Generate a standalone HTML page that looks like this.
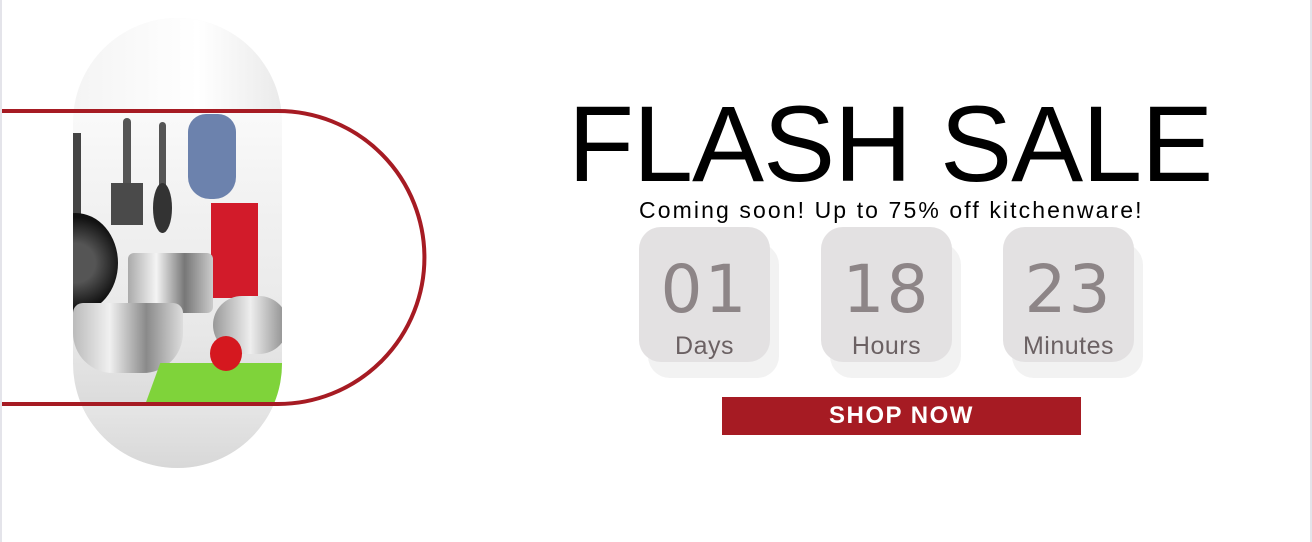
<!DOCTYPE html>
<html><head><meta charset="utf-8"><style>
*{margin:0;padding:0;box-sizing:border-box}
body{width:1312px;height:542px;background:#fff;position:relative;overflow:hidden;font-family:"Liberation Sans",sans-serif}
.edge{position:absolute;top:0;bottom:0;width:2px;background:#e4e4ea}
.pill{position:absolute;left:73px;top:18px;width:209px;height:450px;border-radius:105px;overflow:hidden;background:linear-gradient(180deg,#f6f6f6 0%,#fafafa 20%,#f0f0f0 45%,#e8e8e8 70%,#dcdcdc 85%,#e6e6e6 100%)}
.pill div{position:absolute}
.h1{position:absolute;left:568px;top:84px;font-size:108px;line-height:120px;color:#000;letter-spacing:-1px}
.sub{position:absolute;left:639px;top:197px;font-size:23px;letter-spacing:2.1px;color:#000;white-space:nowrap}
.box{position:absolute;width:131px;height:135px;top:227px}
.box .sh{position:absolute;left:9px;top:16px;width:131px;height:135px;background:#f2f2f2;border-radius:22px}
.box .fr{position:absolute;left:0;top:0;width:131px;height:135px;background:#e3e1e2;border-radius:22px;text-align:center;color:#6b6163}
.num{font-size:66px;line-height:68px;margin-top:29px;letter-spacing:2px;font-family:"DejaVu Sans","Liberation Sans",sans-serif;color:#8d8587}
.lab{font-size:25px;line-height:25px;margin-top:10px;letter-spacing:0.5px}
.btn{position:absolute;left:722px;top:397px;width:359px;height:38px;background:#a61b23;color:#fff;font-weight:bold;font-size:24px;text-align:center;line-height:38px;letter-spacing:1.5px}
</style></head><body>
<div class="edge" style="left:0"></div><div class="edge" style="left:1310px"></div>
<div class="pill">
  <div style="left:0;top:0;width:209px;height:95px;background:linear-gradient(90deg,#f4f4f4,#fff 60%,#eaeaea)"></div>
  <div style="left:115px;top:96px;width:48px;height:85px;background:#6c82ad;border-radius:18px 18px 22px 22px"></div>
  <div style="left:50px;top:100px;width:8px;height:70px;background:#555;border-radius:4px"></div>
  <div style="left:38px;top:165px;width:32px;height:42px;background:#4a4a4a"></div>
  <div style="left:86px;top:104px;width:7px;height:75px;background:#555;border-radius:4px"></div>
  <div style="left:80px;top:165px;width:19px;height:50px;background:#333;border-radius:50%"></div>
  <div style="left:0;top:115px;width:8px;height:90px;background:#444"></div>
  <div style="left:-40px;top:195px;width:85px;height:100px;background:radial-gradient(circle,#555 30%,#111 70%);border-radius:50%"></div>
  <div style="left:138px;top:185px;width:47px;height:95px;background:#d21b2a"></div>
  <div style="left:55px;top:235px;width:85px;height:60px;background:linear-gradient(90deg,#aaa,#f4f4f4,#777,#ccc);border-radius:6px"></div>
  <div style="left:0;top:285px;width:110px;height:70px;background:linear-gradient(90deg,#bbb,#f0f0f0,#8a8a8a,#ddd);border-radius:10px 10px 40px 40px"></div>
  <div style="left:140px;top:278px;width:75px;height:58px;background:linear-gradient(90deg,#999,#eee,#888);border-radius:30px"></div>
  <div style="left:80px;top:345px;width:130px;height:40px;background:#7fd33a;transform:skewX(-20deg)"></div>
  <div style="left:137px;top:318px;width:32px;height:35px;background:#d5181f;border-radius:50%"></div>
  <div style="left:0;top:385px;width:209px;height:65px;background:linear-gradient(180deg,#e6e6e6,#d8d8d8)"></div>
</div>
<svg style="position:absolute;left:0;top:0" width="440" height="480"><path d="M2 111 H278 A146.5 146.5 0 0 1 278 404 H2" fill="none" stroke="#a61b23" stroke-width="4"/></svg>
<div class="h1">FLASH SALE</div>
<div class="sub">Coming soon! Up to 75% off kitchenware!</div>
<div class="box" style="left:639px"><div class="sh"></div><div class="fr"><div class="num">01</div><div class="lab">Days</div></div></div>
<div class="box" style="left:821px"><div class="sh"></div><div class="fr"><div class="num">18</div><div class="lab">Hours</div></div></div>
<div class="box" style="left:1003px"><div class="sh"></div><div class="fr"><div class="num">23</div><div class="lab">Minutes</div></div></div>
<div class="btn">SHOP NOW</div>
</body></html>
